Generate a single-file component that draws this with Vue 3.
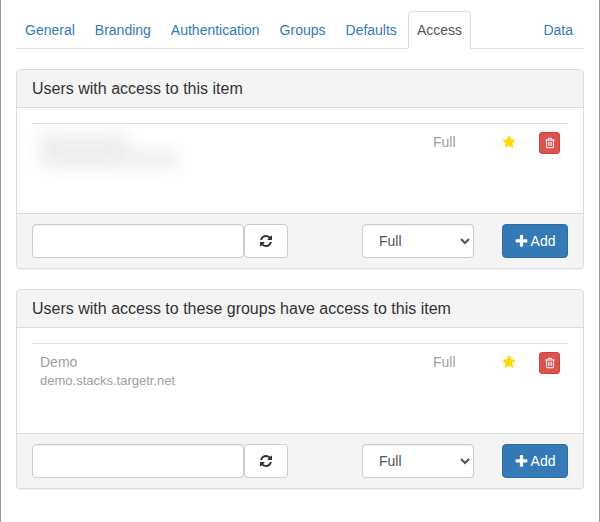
<script setup>
import { reactive, ref } from 'vue'

const tabs = ['General', 'Branding', 'Authentication', 'Groups', 'Defaults', 'Access', 'Data']
const active = ref('Access')

const panels = reactive([
  {
    id: 'users',
    title: 'Users with access to this item',
    search: '',
    level: 'Full',
    rows: [{ id: 1, concealed: true, access: 'Full' }]
  },
  {
    id: 'groups',
    title: 'Users with access to these groups have access to this item',
    search: '',
    level: 'Full',
    rows: [{ id: 1, name: 'Demo', domain: 'demo.stacks.targetr.net', access: 'Full' }]
  }
])
</script>

<template>
  <main class="page">
    <nav class="tabs">
      <a
        v-for="tab in tabs"
        :key="tab"
        href="#"
        class="tab"
        :class="{ active: tab === active, last: tab === 'Data' }"
        @click.prevent="active = tab"
      >{{ tab }}</a>
    </nav>

    <section v-for="panel in panels" :key="panel.id" class="panel">
      <h3 class="panel-title">{{ panel.title }}</h3>

      <div class="panel-body">
        <table class="access-table">
          <tbody>
            <tr v-for="row in panel.rows" :key="row.id">
              <td>
                <div v-if="row.concealed" class="concealed">
                  <div class="smudge short"></div>
                  <div class="smudge long"></div>
                </div>
                <template v-else>
                  <div>{{ row.name }}</div>
                  <div class="domain">{{ row.domain }}</div>
                </template>
              </td>
              <td class="level">{{ row.access }}</td>
              <td class="star-cell">
                <svg class="icon star" viewBox="0 0 1792 1792" aria-hidden="true"><path d="M1728 647q0 22-26 48l-363 354 86 500q1 7 1 20 0 21-10.500 35.500t-30.500 14.500q-19 0-40-12l-449-236-449 236q-22 12-40 12-21 0-31.500-14.500t-10.500-35.500q0-6 2-20l86-500-364-354q-25-27-25-48 0-37 56-46l502-73 225-455q19-41 49-41t49 41l225 455 502 73q56 9 56 46z" /></svg>
              </td>
              <td class="remove-cell">
                <button type="button" class="btn btn-danger" aria-label="Remove">
                  <svg class="icon trash" viewBox="0 0 1792 1792" aria-hidden="true"><path d="M704 736v576q0 14-9 23t-23 9h-64q-14 0-23-9t-9-23v-576q0-14 9-23t23-9h64q14 0 23 9t9 23zm256 0v576q0 14-9 23t-23 9h-64q-14 0-23-9t-9-23v-576q0-14 9-23t23-9h64q14 0 23 9t9 23zm256 0v576q0 14-9 23t-23 9h-64q-14 0-23-9t-9-23v-576q0-14 9-23t23-9h64q14 0 23 9t9 23zm128 724v-948h-896v948q0 22 7 40.500t14.500 27 10.500 8.500h832q3 0 10.500-8.500t14.500-27 7-40.500zm-672-1076h448l-48-117q-7-9-17-11h-317q-10 2-17 11zm928 32v64q0 14-9 23t-23 9h-96v948q0 83-47 143.500t-113 60.500h-832q-66 0-113-58.500t-47-141.500v-952h-96q-14 0-23-9t-9-23v-64q0-14 9-23t23-9h309l70-167q15-37 54-63t79-26h320q40 0 79 26t54 63l70 167h309q14 0 23 9t9 23z" /></svg>
                </button>
              </td>
            </tr>
          </tbody>
        </table>
      </div>

      <form class="panel-footer" @submit.prevent>
        <div class="lookup">
          <input v-model="panel.search" type="text" class="control search" :aria-label="'Search ' + panel.id" />
          <button type="button" class="btn btn-default" aria-label="Refresh">
            <svg class="icon" viewBox="0 0 1792 1792" aria-hidden="true"><path d="M1639 1056q0 5-1 7-64 268-268 434.500t-478 166.500q-146 0-282.500-55t-243.500-157l-129 129q-19 19-45 19t-45-19-19-45v-448q0-26 19-45t45-19h448q26 0 45 19t19 45-19 45l-137 137q71 66 161 102t187 36q134 0 250-65t186-179q11-17 53-117 8-23 30-23h192q13 0 22.500 9.500t9.500 22.500zm25-800v448q0 26-19 45t-45 19h-448q-26 0-45-19t-19-45 19-45l138-138q-148-137-349-137-134 0-250 65t-186 179q-11 17-53 117-8 23-30 23h-199q-13 0-22.500-9.500t-9.500-22.500v-7q65-268 270-434.500t480-166.500q146 0 284 55.500t245 156.500l130-129q19-19 45-19t45 19 19 45z" /></svg>
          </button>
        </div>
        <select v-model="panel.level" class="control" :aria-label="'Access level for ' + panel.id">
          <option>Full</option>
        </select>
        <button type="submit" class="btn btn-primary">
          <svg class="icon plus" viewBox="0 0 1792 1792" aria-hidden="true"><path d="M1600 736v192q0 40-28 68t-68 28h-416v416q0 40-28 68t-68 28h-192q-40 0-68-28t-28-68v-416h-416q-40 0-68-28t-28-68v-192q0-40 28-68t68-28h416v-416q0-40 28-68t68-28h192q40 0 68 28t28 68v416h416q40 0 68 28t28 68z" /></svg>
          <span>Add</span>
        </button>
      </form>
    </section>
  </main>
</template>

<style>
body {
  margin: 0;
  background: #fff;
}
</style>

<style scoped>
* {
  box-sizing: border-box;
}

.page {
  min-height: 100vh;
  padding: 11px 15px 0;
  border: solid #999;
  border-width: 0 1px;
  font-family: "Liberation Sans", Arial, sans-serif;
  font-size: 14px;
  line-height: 20px;
  color: #333;
}

.tabs {
  display: flex;
  margin-bottom: 20px;
  border-bottom: 1px solid #ddd;
}

.tab {
  margin: 0 2px -1px 0;
  padding: 8px;
  border: 1px solid transparent;
  border-radius: 4px 4px 0 0;
  color: #337ab7;
  text-decoration: none;
}

.tab.active {
  border-color: #ddd #ddd #fff;
  background: #fff;
  color: #555;
}

.tab.last {
  margin-left: auto;
}

.panel {
  margin-bottom: 20px;
  border: 1px solid #ddd;
  border-radius: 4px;
  background: #fff;
  box-shadow: 0 1px 1px rgba(0, 0, 0, 0.05);
}

.panel-title {
  margin: 0;
  padding: 10px 15px;
  border-bottom: 1px solid #ddd;
  border-radius: 3px 3px 0 0;
  background: #f4f4f4;
  font-size: 16px;
  font-weight: 400;
  line-height: 17px;
}

.panel-body {
  min-height: 105px;
  padding: 15px 15px 0;
}

.access-table {
  width: 100%;
  border-collapse: separate;
  border-spacing: 0;
  table-layout: fixed;
  color: #a0a0a0;
}

.access-table td {
  padding: 8px;
  border-top: 1px solid #ddd;
  vertical-align: top;
}

.access-table .level {
  width: 70px;
}

.access-table .star-cell {
  width: 36px;
  padding: 11px 0 0 7px;
}

.access-table .remove-cell {
  width: 37px;
}

.domain {
  font-size: 13px;
  line-height: 17px;
}

.concealed {
  padding: 3px 0;
  filter: blur(9px);
}

.smudge {
  height: 16px;
  background: #ececec;
}

.smudge.short {
  width: 88px;
}

.smudge.long {
  width: 138px;
}

.icon {
  display: block;
  flex: none;
  width: 14px;
  height: 14px;
  fill: currentColor;
}

.star {
  color: #ffd900;
}

.trash {
  width: 12px;
  height: 12px;
}

.plus {
  width: 15px;
  height: 15px;
}

.btn {
  display: flex;
  align-items: center;
  justify-content: center;
  height: 34px;
  margin: 0;
  padding: 0 12px;
  border: 1px solid transparent;
  border-radius: 4px;
  font: inherit;
  cursor: pointer;
}

.btn-danger {
  width: 21px;
  height: 22px;
  padding: 0;
  border-color: #d43f3a;
  border-radius: 3px;
  background: #d9534f;
  color: #fff;
}

.btn-default {
  width: 44px;
  border-color: #ccc;
  background: #fff;
  color: #333;
}

.btn-primary {
  gap: 2px;
  padding: 0 12px 0 11px;
  border-color: #2e6da4;
  background: #337ab7;
  color: #fff;
}

.panel-footer {
  display: grid;
  grid-template-columns: 1fr 112px 66px;
  gap: 28px;
  padding: 10px 15px;
  border-top: 1px solid #ddd;
  border-radius: 0 0 3px 3px;
  background: #f4f4f4;
}

.lookup {
  display: flex;
  max-width: 256px;
}

.control {
  min-width: 0;
  height: 34px;
  margin: 0;
  padding: 6px 12px;
  border: 1px solid #ccc;
  border-radius: 4px;
  background-color: #fff;
  box-shadow: inset 0 1px 1px rgba(0, 0, 0, 0.075);
  font: inherit;
  color: #555;
}

.search {
  flex: 1;
}
</style>
